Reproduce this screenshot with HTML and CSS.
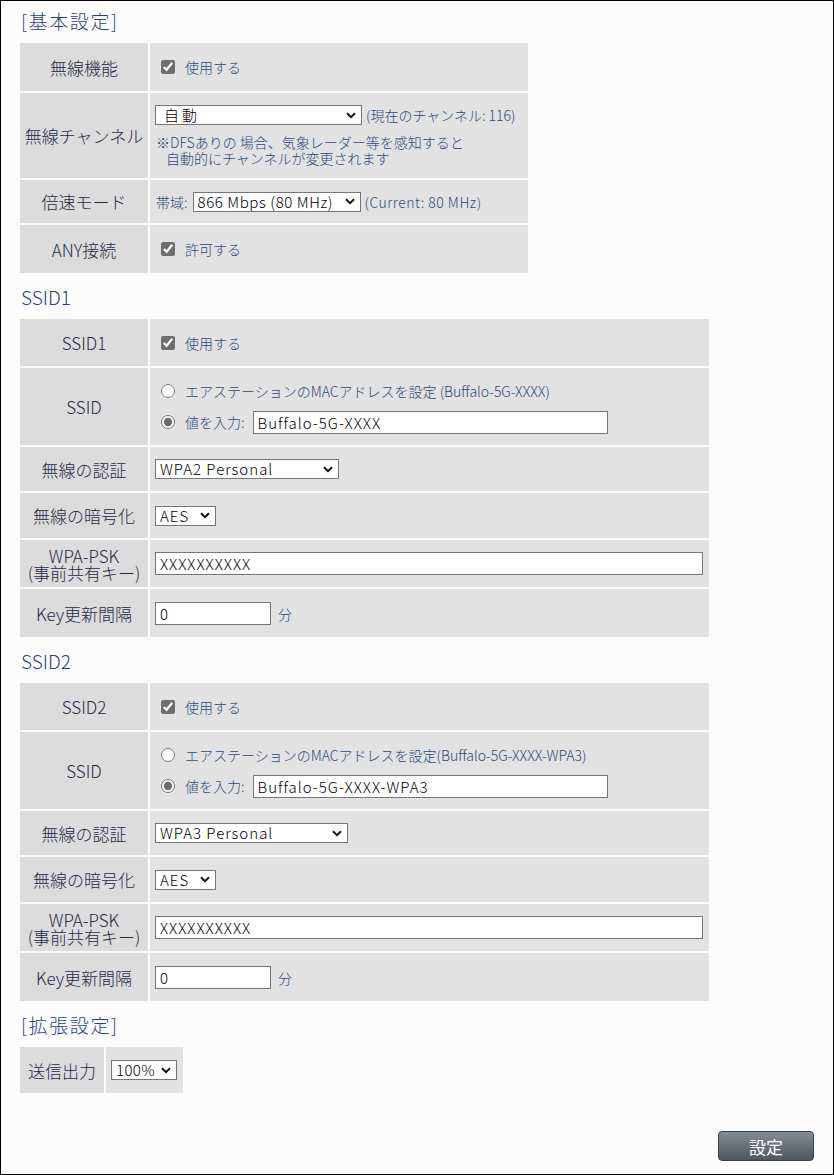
FILE: index.html
```html
<!DOCTYPE html>
<html lang="ja">
<head>
    <meta charset="UTF-8">
    <meta name="viewport" content="width=device-width, initial-scale=1.0">
    <title>無線設定 (5 GHz)</title>
    <link rel="stylesheet" href="styles.css">
</head>
<body>
    <div class="frame">
        <h2 class="section bracket first">[基本設定]</h2>
        <table class="settings basic">
            <tr class="h48">
                <th>無線機能</th>
                <td><label class="check"><input type="checkbox" checked>使用する</label></td>
            </tr>
            <tr class="h85">
                <th>無線チャンネル</th>
                <td>
                    <div class="line">
                        <select class="sel-channel"><option>自動</option></select>
                        <span class="hint">(現在のチャンネル: 116)</span>
                    </div>
                    <p class="note">※DFSありの 場合、気象レーダー等を感知すると<br><span class="indent">自動的にチャンネルが変更されます</span></p>
                </td>
            </tr>
            <tr class="h43">
                <th>倍速モード</th>
                <td>
                    <div class="line">
                        <span class="hint tight">帯域:</span>
                        <select class="sel-band"><option>866 Mbps (80 MHz)</option></select>
                        <span class="hint wide-hint">(Current: 80 MHz)</span>
                    </div>
                </td>
            </tr>
            <tr class="h48">
                <th>ANY接続</th>
                <td><label class="check"><input type="checkbox" checked>許可する</label></td>
            </tr>
        </table>

        <h2 class="section">SSID1</h2>
        <table class="settings wide">
            <tr class="h47">
                <th>SSID1</th>
                <td><label class="check"><input type="checkbox" checked>使用する</label></td>
            </tr>
            <tr class="h77">
                <th>SSID</th>
                <td>
                    <div class="ssid-choice">
                        <label class="check"><input type="radio" name="ssid1">エアステーションのMACアドレスを設定 (Buffalo-5G-XXXX)</label>
                        <label class="check"><input type="radio" name="ssid1" checked>値を入力:<input type="text" class="txt-ssid" value="Buffalo-5G-XXXX"></label>
                    </div>
                </td>
            </tr>
            <tr class="h44">
                <th>無線の認証</th>
                <td><select class="sel-auth"><option>WPA2 Personal</option></select></td>
            </tr>
            <tr class="h45">
                <th>無線の暗号化</th>
                <td><select class="sel-enc"><option>AES</option></select></td>
            </tr>
            <tr class="h47">
                <th class="two-line">WPA-PSK<br>(事前共有キー)</th>
                <td><input type="text" class="txt-psk" value="XXXXXXXXXX"></td>
            </tr>
            <tr class="h48">
                <th>Key更新間隔</th>
                <td><input type="text" class="txt-key" value="0"><span class="hint unit">分</span></td>
            </tr>
        </table>

        <h2 class="section">SSID2</h2>
        <table class="settings wide">
            <tr class="h47">
                <th>SSID2</th>
                <td><label class="check"><input type="checkbox" checked>使用する</label></td>
            </tr>
            <tr class="h77">
                <th>SSID</th>
                <td>
                    <div class="ssid-choice">
                        <label class="check"><input type="radio" name="ssid2">エアステーションのMACアドレスを設定(Buffalo-5G-XXXX-WPA3)</label>
                        <label class="check"><input type="radio" name="ssid2" checked>値を入力:<input type="text" class="txt-ssid" value="Buffalo-5G-XXXX-WPA3"></label>
                    </div>
                </td>
            </tr>
            <tr class="h44">
                <th>無線の認証</th>
                <td><select class="sel-auth wpa3"><option>WPA3 Personal</option></select></td>
            </tr>
            <tr class="h45">
                <th>無線の暗号化</th>
                <td><select class="sel-enc"><option>AES</option></select></td>
            </tr>
            <tr class="h47">
                <th class="two-line">WPA-PSK<br>(事前共有キー)</th>
                <td><input type="text" class="txt-psk" value="XXXXXXXXXX"></td>
            </tr>
            <tr class="h48">
                <th>Key更新間隔</th>
                <td><input type="text" class="txt-key" value="0"><span class="hint unit">分</span></td>
            </tr>
        </table>

        <h2 class="section bracket">[拡張設定]</h2>
        <table class="settings small">
            <tr class="h46">
                <th class="narrow">送信出力</th>
                <td><select class="sel-power"><option>100%</option></select></td>
            </tr>
        </table>

        <div class="actions">
            <button type="button" class="submit-btn">設定</button>
        </div>
    </div>
</body>
</html>
```

FILE: styles.css
```css
html, body {
    margin: 0;
    padding: 0;
}
body {
    font-family: "Noto Sans CJK JP", "Noto Sans", sans-serif;
    font-weight: 300;
    background-color: #fcfcfc;
    color: #1f2a44;
}
.frame {
    box-sizing: border-box;
    width: 834px;
    height: 1175px;
    border: 1px solid #000;
    padding: 0 17px;
    background-color: #fcfcfc;
}
.section {
    margin: 10px 0 8px;
    padding-left: 3px;
    font-size: 19px;
    font-weight: 300;
    line-height: 24px;
    color: #2b3f8f;
}
.section.bracket {
    letter-spacing: 1.6px;
}
.section.first {
    margin-top: 8px;
}
.settings {
    border-collapse: separate;
    border-spacing: 2px;
    table-layout: fixed;
}
.settings.basic {
    width: 512px;
}
.settings.wide {
    width: 693px;
}
.settings.small {
    width: 167px;
}
.settings th {
    width: 128px;
    padding: 0;
    background-color: #dcdcdc;
    font-size: 17px;
    font-weight: 300;
    text-align: center;
    vertical-align: middle;
    color: #1f2a44;
    white-space: nowrap;
}
.settings th.two-line {
    font-size: 17px;
    line-height: 17px;
}
.settings th.narrow {
    width: 84px;
}
.settings td {
    padding: 0 0 0 5px;
    background-color: #e2e2e2;
    font-size: 14px;
    vertical-align: middle;
    color: #2b4a78;
}
.h43 { height: 43px; }
.h44 { height: 44px; }
.h45 { height: 45px; }
.h46 { height: 46px; }
.h47 { height: 47px; }
.h48 { height: 48px; }
.h77 { height: 77px; }
.h85 { height: 85px; }

.check {
    display: flex;
    align-items: center;
    font-size: 14px;
    color: #2b4a78;
    white-space: nowrap;
}
.check input[type="checkbox"],
.check input[type="radio"] {
    width: 14px;
    height: 14px;
    margin: 0 10px 0 6px;
    accent-color: #6e6e6e;
}
.line {
    display: flex;
    align-items: center;
    white-space: nowrap;
}
.hint {
    margin-left: 4px;
    font-size: 14px;
    color: #2b4a78;
}
.hint.tight {
    margin: 0 3px 0 1px;
}
.hint.wide-hint {
    letter-spacing: 0.5px;
}
.hint.unit {
    margin-left: 7px;
}
.note {
    margin: 9px 0 0 1px;
    font-size: 14px;
    line-height: 16px;
    color: #2b4a78;
}
.note .indent {
    padding-left: 10px;
}
.ssid-choice {
    display: flex;
    flex-direction: column;
    gap: 9px;
}
.ssid-choice .check {
    height: 22px;
}

select,
input[type="text"] {
    box-sizing: border-box;
    font-family: "Noto Sans CJK JP", sans-serif;
    font-weight: 300;
    font-size: 15px;
    letter-spacing: 1px;
    color: #000;
    background-color: #fff;
    border: 1px solid #767676;
    border-radius: 0;
    margin: 0;
}
select {
    -webkit-appearance: none;
    appearance: none;
    height: 20px;
    line-height: 18px;
    padding: 0 18px 0 4px;
    background-image: url("data:image/svg+xml,%3Csvg xmlns='http://www.w3.org/2000/svg' width='10' height='7' viewBox='0 0 10 7'%3E%3Cpath d='M1 1.2 L5 5.2 L9 1.2' fill='none' stroke='%23111' stroke-width='2'/%3E%3C/svg%3E");
    background-repeat: no-repeat;
    background-position: right 5px center;
}
input[type="text"] {
    height: 23px;
    padding: 0 4px;
}
.sel-channel { width: 207px; padding-left: 8px; letter-spacing: 3px; }
.sel-band { width: 168px; letter-spacing: 0.6px; margin-left: 2px; }
.sel-auth { width: 184px; }
.sel-auth.wpa3 { width: 193px; }
.sel-enc { width: 61px; }
.sel-power { width: 66px; letter-spacing: 0.4px; }
.txt-ssid { width: 355px; margin-left: 8px !important; }
.txt-psk { width: 548px; letter-spacing: -0.6px; font-size: 14px; }
.txt-key { width: 116px; }

.actions {
    margin-top: 36px;
    padding-right: 2px;
    text-align: right;
}
.submit-btn {
    width: 96px;
    height: 30px;
    padding: 0;
    border: 1px solid #3b4047;
    border-radius: 4px;
    background: linear-gradient(#858b93, #50565e);
    color: #fff;
    font-family: "Noto Sans CJK JP", sans-serif;
    font-size: 17px;
    cursor: pointer;
}
.submit-btn:hover {
    background: linear-gradient(#959ba3, #60666e);
}
```
